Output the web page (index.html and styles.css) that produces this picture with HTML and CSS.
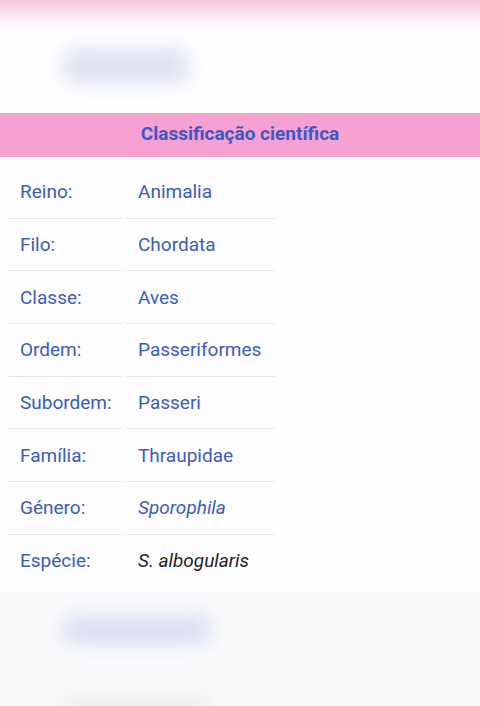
FILE: index.html
```html
<!DOCTYPE html>
<html lang="pt">
<head>
    <meta charset="UTF-8">
    <meta name="viewport" content="width=device-width, initial-scale=1.0">
    <title>Classificação científica</title>
    <link rel="stylesheet" href="styles.css">
</head>
<body>

<div class="topFade"></div>

<div class="blurBlock">
    <div class="blob blobTop"></div>
</div>

<div class="infoHeader">Classificação científica</div>

<table class="taxTable">
    <tr><td class="label">Reino:</td><td class="value">Animalia</td></tr>
    <tr><td class="label">Filo:</td><td class="value">Chordata</td></tr>
    <tr><td class="label">Classe:</td><td class="value">Aves</td></tr>
    <tr><td class="label">Ordem:</td><td class="value">Passeriformes</td></tr>
    <tr><td class="label">Subordem:</td><td class="value">Passeri</td></tr>
    <tr><td class="label">Família:</td><td class="value">Thraupidae</td></tr>
    <tr><td class="label">Género:</td><td class="value"><i>Sporophila</i></td></tr>
    <tr class="last"><td class="label">Espécie:</td><td class="value species"><i>S. albogularis</i></td></tr>
</table>

<div class="bottomArea">
    <div class="blob blobBottom"></div>
    <div class="blob blobGrey"></div>
</div>

</body>
</html>
```

FILE: styles.css
```css
/* Global */
body {
    margin: 0;
    padding: 0;
    background: #fefdff;
    font-family: 'Roboto', 'Liberation Sans', sans-serif;
    color: #3b5cbb;
    overflow: hidden;
}

/* Pink fade at the very top */
.topFade {
    height: 26px;
    background: linear-gradient(to bottom, #f7c6df, #fbe6f1 60%, #fefdff);
}

.blurBlock {
    box-sizing: border-box;
    height: 87px;
    padding: 22px 0 0 62px;
}

.blob {
    filter: blur(9px);
    border-radius: 20px;
}

.blobTop {
    width: 128px;
    height: 36px;
    background: #dde3f1;
}

/* Header bar */
.infoHeader {
    height: 44px;
    line-height: 42px;
    background: #f7a0d2;
    text-align: center;
    font-weight: bold;
    font-size: 19px;
    color: #3d58c0;
}

/* Classification table */
.taxTable {
    margin: 9px 4px 0;
    border-collapse: separate;
    border-spacing: 4px 0;
    font-size: 19px;
}

.taxTable td {
    height: 51.7px;
    padding: 0 0 0 12px;
    border-bottom: 1px solid #e6e6ec;
    white-space: nowrap;
}

.taxTable .last td {
    border-bottom: none;
}

.label {
    width: 102px;
}

.value {
    width: 137px;
}

.species {
    color: #1f1f24;
}

/* Lower blurred area */
.bottomArea {
    box-sizing: border-box;
    margin-top: 4px;
    height: 120px;
    background: #fafafc;
    padding: 24px 0 0 62px;
}

.blobBottom {
    width: 150px;
    height: 30px;
    background: #d9e0f0;
}

.blobGrey {
    margin-top: 52px;
    width: 150px;
    height: 20px;
    background: #eeeef0;
}
```
